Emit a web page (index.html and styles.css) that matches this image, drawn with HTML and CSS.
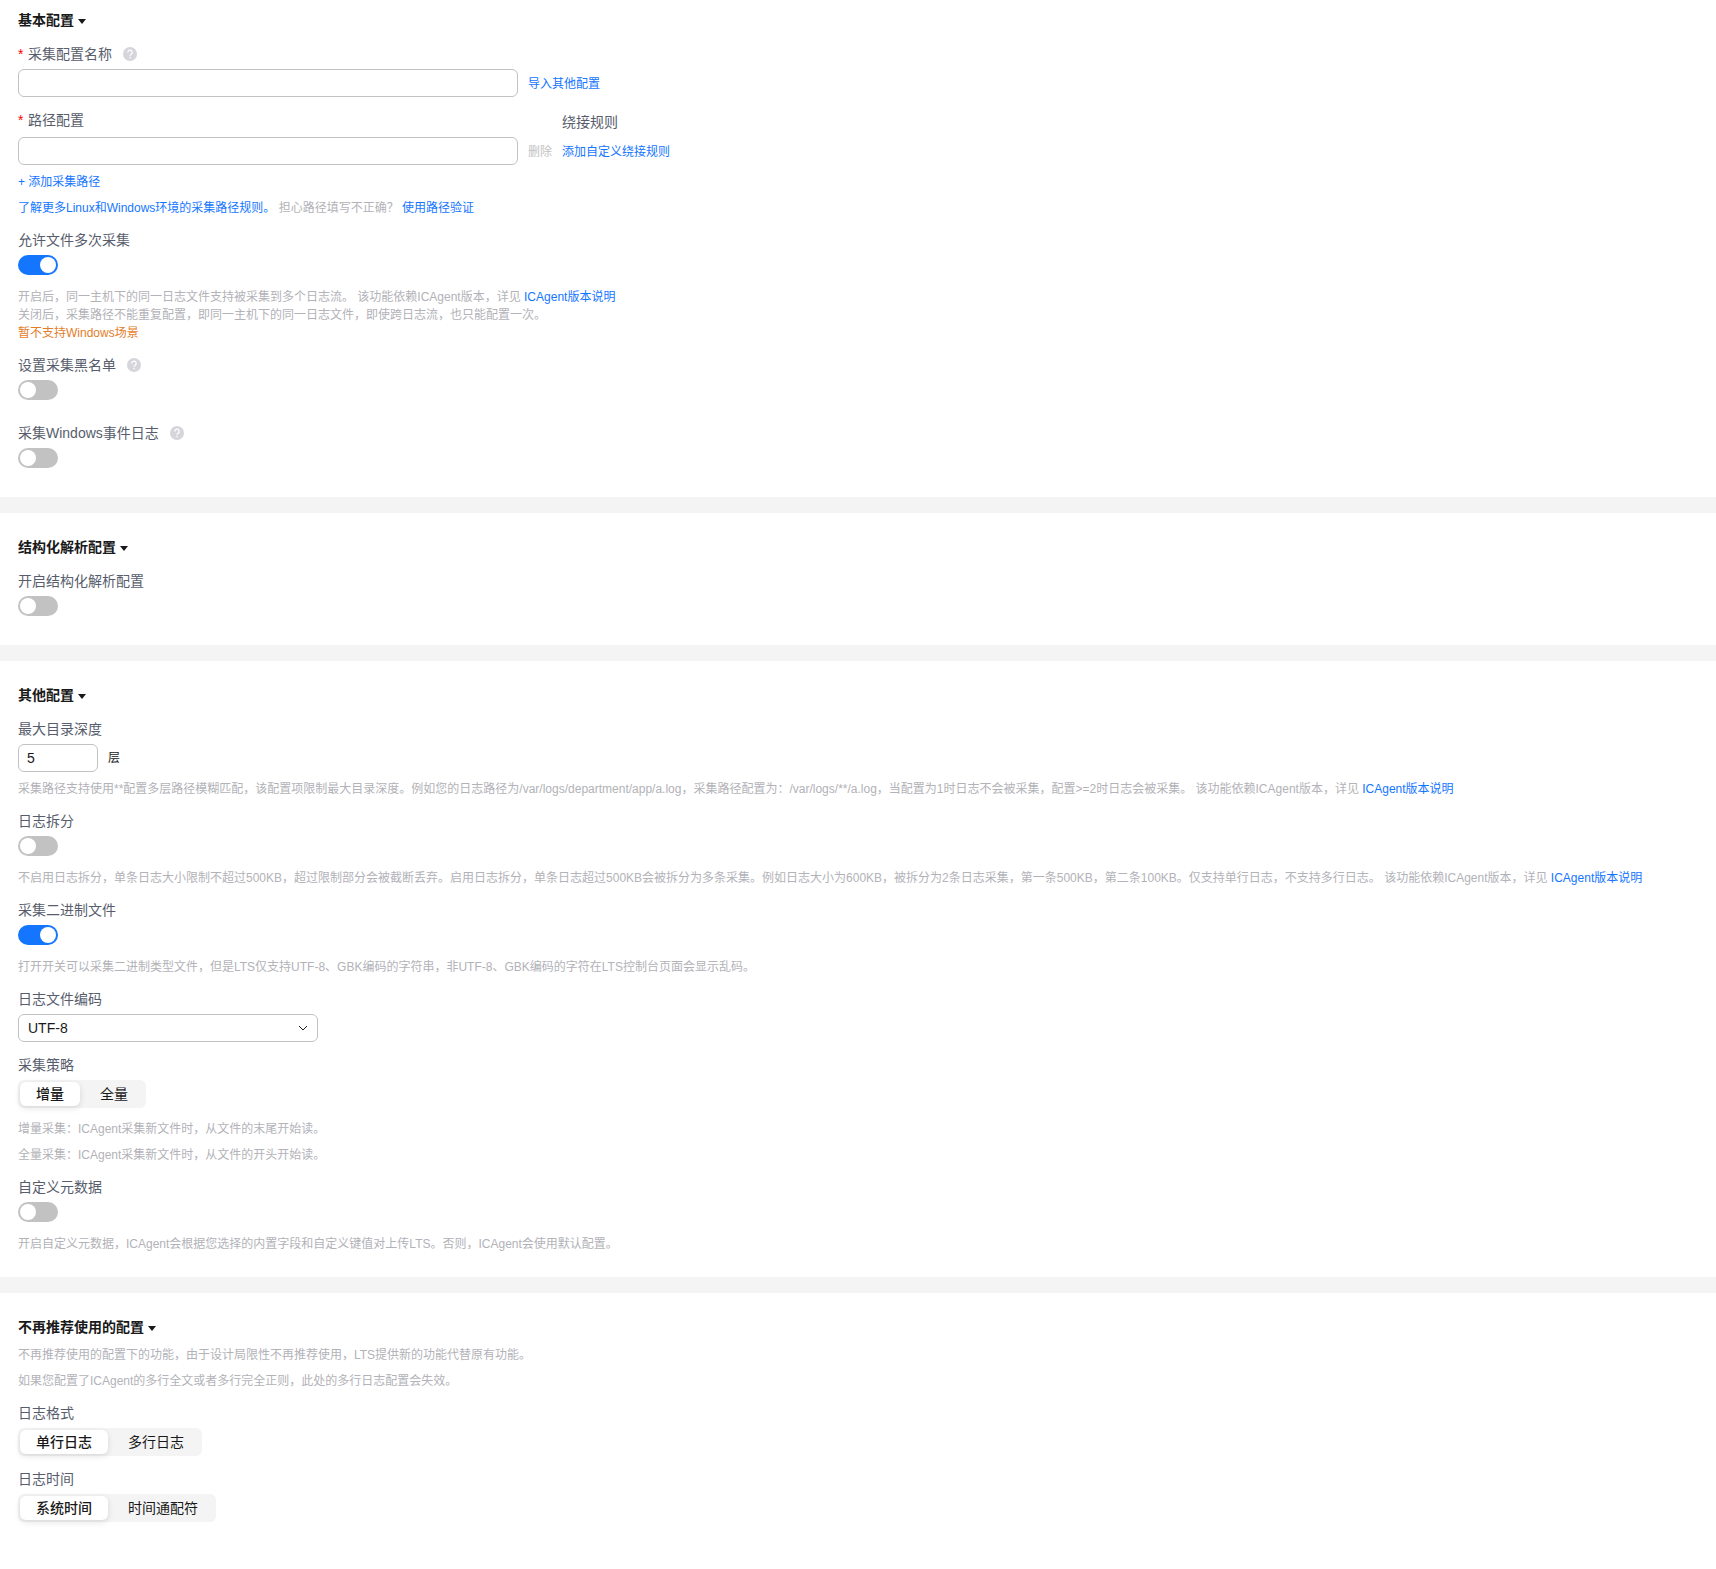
FILE: index.html
```html
<!DOCTYPE html>
<html lang="zh-CN">
	<head>
		<meta charset="UTF-8">
		<title>采集配置</title>
		<link rel="stylesheet" href="styles.css">
	</head>
	<body>
		<form class="config">
			<!-- 基本配置 -->
			<section class="section section-first">
				<h2 class="title">基本配置<i class="caret"></i></h2>
				<div class="item">
					<div class="label-row">
						<span class="required">*</span>
						<label class="label" for="name">采集配置名称</label>
						<svg class="help" viewBox="0 0 14 14"><circle cx="7" cy="7" r="7"/><path d="M4.8 5.4a2.2 2.2 0 1 1 3.3 1.9c-.8.4-1.1.8-1.1 1.5M7 9.8v1.4"/></svg>
					</div>
					<div class="row">
						<input class="input" type="text" id="name">
						<a class="link" href="#">导入其他配置</a>
					</div>
				</div>
				<div class="item">
					<div class="path-grid">
						<div class="label-row">
							<span class="required">*</span>
							<label class="label" for="path">路径配置</label>
						</div>
						<span class="label rule-label">绕接规则</span>
						<input class="input" type="text" id="path">
						<button class="text-btn" type="button" disabled>删除</button>
						<a class="link" href="#">添加自定义绕接规则</a>
					</div>
					<p class="hint"><a class="link" href="#">+ 添加采集路径</a></p>
					<p class="hint"><a class="link" href="#">了解更多Linux和Windows环境的采集路径规则。</a> 担心路径填写不正确？ <a class="link" href="#">使用路径验证</a></p>
				</div>
				<div class="item">
					<label class="label" for="multi">允许文件多次采集</label>
					<input class="switch" type="checkbox" id="multi" checked>
					<p class="hint">开启后，同一主机下的同一日志文件支持被采集到多个日志流。 该功能依赖ICAgent版本，详见 <a class="link" href="#">ICAgent版本说明</a><br>关闭后，采集路径不能重复配置，即同一主机下的同一日志文件，即使跨日志流，也只能配置一次。<br><span class="warn">暂不支持Windows场景</span></p>
				</div>
				<div class="item item-loose">
					<div class="label-row">
						<label class="label" for="black">设置采集黑名单</label>
						<svg class="help" viewBox="0 0 14 14"><circle cx="7" cy="7" r="7"/><path d="M4.8 5.4a2.2 2.2 0 1 1 3.3 1.9c-.8.4-1.1.8-1.1 1.5M7 9.8v1.4"/></svg>
					</div>
					<input class="switch" type="checkbox" id="black">
				</div>
				<div class="item">
					<div class="label-row">
						<label class="label" for="winlog">采集Windows事件日志</label>
						<svg class="help" viewBox="0 0 14 14"><circle cx="7" cy="7" r="7"/><path d="M4.8 5.4a2.2 2.2 0 1 1 3.3 1.9c-.8.4-1.1.8-1.1 1.5M7 9.8v1.4"/></svg>
					</div>
					<input class="switch" type="checkbox" id="winlog">
				</div>
			</section>

			<!-- 结构化解析配置 -->
			<section class="section">
				<h2 class="title">结构化解析配置<i class="caret"></i></h2>
				<div class="item">
					<label class="label" for="struct">开启结构化解析配置</label>
					<input class="switch" type="checkbox" id="struct">
				</div>
			</section>

			<!-- 其他配置 -->
			<section class="section section-hint-end">
				<h2 class="title">其他配置<i class="caret"></i></h2>
				<div class="item">
					<label class="label" for="depth">最大目录深度</label>
					<div class="row">
						<input class="input input-small" type="text" id="depth" value="5">
						<span class="unit">层</span>
					</div>
					<p class="hint">采集路径支持使用**配置多层路径模糊匹配，该配置项限制最大目录深度。例如您的日志路径为/var/logs/department/app/a.log，采集路径配置为：/var/logs/**/a.log，当配置为1时日志不会被采集，配置&gt;=2时日志会被采集。 该功能依赖ICAgent版本，详见 <a class="link" href="#">ICAgent版本说明</a></p>
				</div>
				<div class="item">
					<label class="label" for="split">日志拆分</label>
					<input class="switch" type="checkbox" id="split">
					<p class="hint">不启用日志拆分，单条日志大小限制不超过500KB，超过限制部分会被截断丢弃。启用日志拆分，单条日志超过500KB会被拆分为多条采集。例如日志大小为600KB，被拆分为2条日志采集，第一条500KB，第二条100KB。仅支持单行日志，不支持多行日志。 该功能依赖ICAgent版本，详见 <a class="link" href="#">ICAgent版本说明</a></p>
				</div>
				<div class="item">
					<label class="label" for="binary">采集二进制文件</label>
					<input class="switch" type="checkbox" id="binary" checked>
					<p class="hint">打开开关可以采集二进制类型文件，但是LTS仅支持UTF-8、GBK编码的字符串，非UTF-8、GBK编码的字符在LTS控制台页面会显示乱码。</p>
				</div>
				<div class="item">
					<label class="label" for="encoding">日志文件编码</label>
					<div class="select-wrap">
						<select class="select" id="encoding">
							<option>UTF-8</option>
							<option>GBK</option>
						</select>
						<svg class="arrow" viewBox="0 0 10 6"><path d="M1 1l4 4 4-4"/></svg>
					</div>
				</div>
				<div class="item">
					<span class="label" id="policy">采集策略</span>
					<div class="segment" role="group" aria-labelledby="policy">
						<button class="seg-btn active" type="button">增量</button>
						<button class="seg-btn" type="button">全量</button>
					</div>
					<p class="hint">增量采集：ICAgent采集新文件时，从文件的末尾开始读。</p>
					<p class="hint">全量采集：ICAgent采集新文件时，从文件的开头开始读。</p>
				</div>
				<div class="item">
					<label class="label" for="meta">自定义元数据</label>
					<input class="switch" type="checkbox" id="meta">
					<p class="hint">开启自定义元数据，ICAgent会根据您选择的内置字段和自定义键值对上传LTS。否则，ICAgent会使用默认配置。</p>
				</div>
			</section>

			<!-- 不再推荐使用的配置 -->
			<section class="section">
				<h2 class="title">不再推荐使用的配置<i class="caret"></i></h2>
				<div class="item item-intro">
					<p class="hint">不再推荐使用的配置下的功能，由于设计局限性不再推荐使用，LTS提供新的功能代替原有功能。</p>
					<p class="hint">如果您配置了ICAgent的多行全文或者多行完全正则，此处的多行日志配置会失效。</p>
				</div>
				<div class="item">
					<span class="label" id="format">日志格式</span>
					<div class="segment" role="group" aria-labelledby="format">
						<button class="seg-btn active" type="button">单行日志</button>
						<button class="seg-btn" type="button">多行日志</button>
					</div>
				</div>
				<div class="item">
					<span class="label" id="time">日志时间</span>
					<div class="segment" role="group" aria-labelledby="time">
						<button class="seg-btn active" type="button">系统时间</button>
						<button class="seg-btn" type="button">时间通配符</button>
					</div>
				</div>
			</section>
		</form>
	</body>
</html>
```
FILE: styles.css
```css
* {margin: 0; padding: 0; box-sizing: border-box;}
body {
	background: #fff;
	color: #191919;
	font: 14px/22px "Liberation Sans", "Noto Sans CJK SC", sans-serif;
}
input, select, button {
	font: inherit;
	color: inherit;
}
a {text-decoration: none;}

/* 分区 */
.section {
	padding: 23px 18px 29px;
}
.section + .section {
	border-top: 16px solid #f4f4f4;
}
.section-first {padding-top: 9px;}
.section-hint-end {padding-bottom: 24px;}

.title {
	display: flex;
	align-items: center;
	font-size: 14px;
	font-weight: bold;
	margin-bottom: 12px;
}
.caret {
	margin-left: 4px;
	margin-top: 2px;
	border: 4px solid transparent;
	border-top: 5px solid #191919;
	border-bottom: 0;
}

/* 表单项 */
.item + .item {margin-top: 12px;}
.item-loose + .item {margin-top: 22px;}
.label {
	display: block;
	width: fit-content;
	color: #575d6c;
	margin-bottom: 4px;
}
.label-row {
	display: flex;
	align-items: center;
	margin-bottom: 4px;
}
.label-row .label {margin-bottom: 0;}
.required {
	width: 10px;
	color: #ff0000;
}
.help {
	width: 14px;
	height: 14px;
	margin-left: 11px;
	fill: #d5d5db;
}
.help path {
	fill: none;
	stroke: #fff;
	stroke-width: 1.3;
}

.row {
	display: flex;
	align-items: center;
	gap: 10px;
}
.path-grid {
	display: grid;
	grid-template-columns: minmax(0, 500px) auto 1fr;
	column-gap: 10px;
	align-items: center;
}
.path-grid .label-row {margin-bottom: 6px;}
.rule-label {
	grid-column: 3;
	margin: 2px 0 4px;
}

.input {
	width: 100%;
	max-width: 500px;
	height: 28px;
	padding: 0 8px;
	border: 1px solid #c2c2c2;
	border-radius: 6px;
	background: #fff;
	outline: none;
}
.input-small {width: 80px;}
.unit {font-size: 12px;}

.link, .text-btn {
	font-size: 12px;
	color: #1476ff;
	white-space: nowrap;
}
.row .link, .path-grid .link, .text-btn {padding-top: 2px;}
.text-btn {
	border: none;
	background: none;
}
.text-btn:disabled {color: #c2c2c2;}

.hint {
	margin-top: 8px;
	font-size: 12px;
	line-height: 18px;
	color: #b2b2b8;
}
.switch + .hint {margin-top: 13px;}
.segment + .hint {margin-top: 12px;}
.item-intro {margin-top: -4px;}
.item-intro .hint:first-child {margin-top: 0;}
.warn {color: #e37d29;}

/* 开关 */
.switch {
	appearance: none;
	display: block;
	width: 40px;
	height: 20px;
	padding: 2px;
	border-radius: 10px;
	background: #c2c2c2;
	cursor: pointer;
}
.switch::before {
	content: "";
	display: block;
	width: 16px;
	height: 16px;
	border-radius: 50%;
	background: #fff;
}
.switch:checked {background: #1476ff;}
.switch:checked::before {margin-left: auto;}

/* 下拉框 */
.select-wrap {
	position: relative;
	max-width: 300px;
}
.select {
	appearance: none;
	display: block;
	width: 100%;
	height: 28px;
	padding: 0 30px 0 9px;
	border: 1px solid #c2c2c2;
	border-radius: 6px;
	background: #fff;
}
.arrow {
	position: absolute;
	right: 10px;
	top: 11px;
	width: 10px;
	height: 6px;
	fill: none;
	stroke: #191919;
	pointer-events: none;
}

/* 分段按钮 */
.segment {
	display: flex;
	gap: 4px;
	width: fit-content;
	padding: 2px;
	border-radius: 6px;
	background: #f4f4f4;
}
.seg-btn {
	height: 24px;
	padding: 0 16px;
	border: none;
	border-radius: 6px;
	background: none;
	line-height: 24px;
	cursor: pointer;
}
.seg-btn.active {
	background: #fff;
	box-shadow: 0 2px 6px rgba(0, 0, 0, 0.12);
	font-weight: 500;
}
```
